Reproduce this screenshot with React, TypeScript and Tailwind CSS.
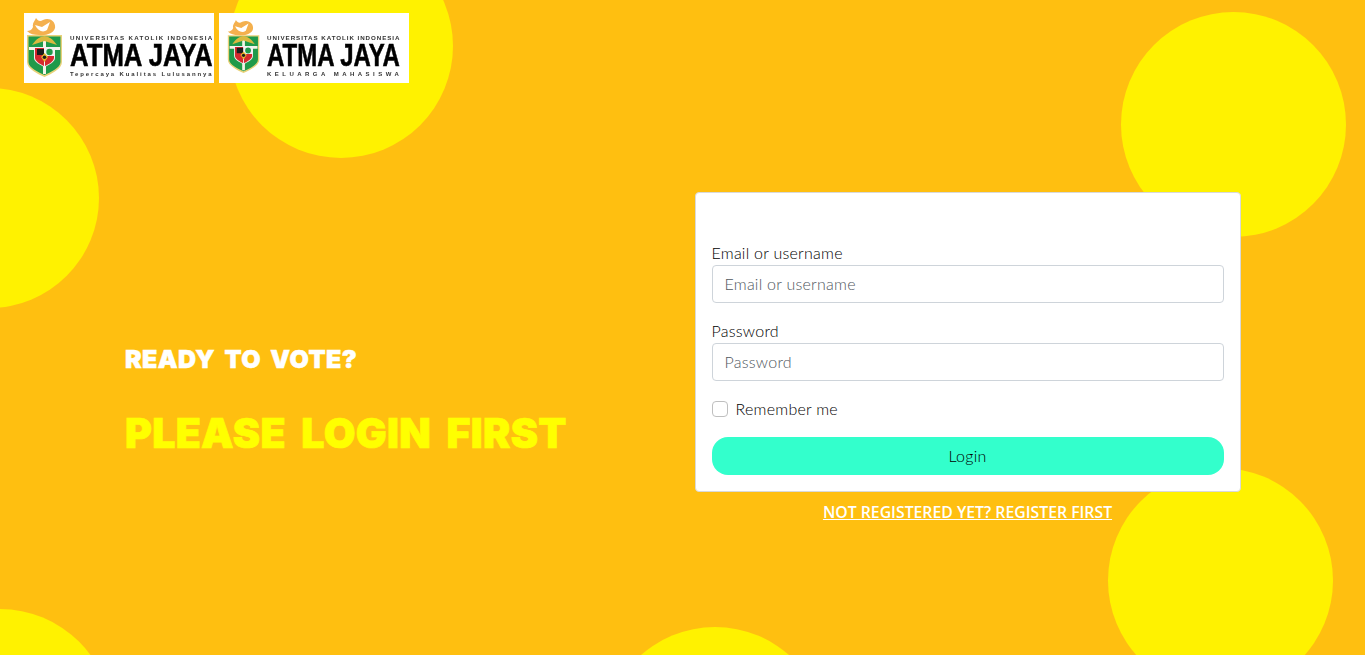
const bodyFont = "font-['Lato','Liberation_Sans',sans-serif]";

function Crest({ className }: { className: string }) {
  return (
    <svg viewBox="0 0 40 60" className={`shrink-0 blur-[0.3px] ${className}`}>
      {/* shield */}
      <g transform="translate(0 -5)">
        <path d="M2 23 H37 V50 C37 57 26 62 19.5 65 C13 62 2 57 2 50 Z" fill="#e8d27a" />
        <path d="M3.5 24.5 H35.5 V50 C35.5 56 25 60.5 19.5 63 C14 60.5 3.5 56 3.5 50 Z" fill="#1f9a4a" />
        <path d="M18 25 H21 V62 H18 Z M4 35 H35 V38 H4 Z" fill="#f4f4e8" />
        <path d="M7 33 C12 26 15 25 19.5 24 C24 25 27 26 32 33 L19.5 29 Z" fill="#d9b93f" />
        {/* inner shield */}
        <path d="M9 35 H30 V46 C30 50 24 53 19.5 55 C15 53 9 50 9 46 Z" fill="#f2f2f2" />
        <path d="M10 36 H19 V45 C19 48 19 50 19 54 C15 52 10 49 10 46 Z" fill="#d42a2e" />
        <path d="M12 37 H19 V43 H12 Z" fill="#1c1c1c" />
        <path d="M20 44 H29 V46 C29 49 24 52 20 54 Z" fill="#d42a2e" />
        <circle cx="24.5" cy="40" r="3.2" fill="#1f9a4a" />
        <path d="M19.5 41 L23 45 L19.5 50 L16 45 Z" fill="#e8b830" />
        <circle cx="19.5" cy="45.3" r="1.8" fill="#1c1c1c" />
      </g>
      {/* flame and bird */}
      <path d="M8 10 C7 6 10 4 11 1 C13 4 15 5 18 3 C25 0 31 5 30 11 C29 16 21 19 14 18 C9 18 5 17 2 14 C4 14 7 13 8 10 Z" fill="#f4b04e" />
      <path d="M10 8 L17 10 L25 5 L22 13 C18 16 13 14 10 8 Z" fill="#fff" />
    </svg>
  );
}

type LogoProps = {
  subtitle: string;
  crestClass: string;
  textClass: string;
  topClass: string;
  nameClass: string;
  subtitleClass: string;
};

function Logo({ subtitle, crestClass, textClass, topClass, nameClass, subtitleClass }: LogoProps) {
  return (
    <div className="flex h-[70px] w-[190px] items-start overflow-hidden bg-white">
      <Crest className={crestClass} />
      <div className={`pt-[21px] font-['Liberation_Sans',sans-serif] text-black blur-[0.25px] ${textClass}`}>
        <div className={`h-[7px] text-[6.2px] leading-[7px] font-bold whitespace-nowrap text-[#333333] ${topClass}`}>UNIVERSITAS KATOLIK INDONESIA</div>
        <div className={`mt-[3px] h-[24px] w-fit origin-left scale-y-[1.45] text-[22px] leading-[24px] font-bold whitespace-nowrap [-webkit-text-stroke:0.4px_black] ${nameClass}`}>ATMA JAYA</div>
        <div className={`mt-[3px] h-[7px] text-[6px] leading-[7px] font-bold whitespace-nowrap text-[#333333] ${subtitleClass}`}>{subtitle}</div>
      </div>
    </div>
  );
}

export default function App() {
  return (
    <div className={`relative h-[655px] overflow-hidden bg-[#ffbf10] ${bodyFont}`}>
      {/* decorative circles */}
      <div className="absolute left-[229px] top-[-66px] h-[224px] w-[224px] rounded-full bg-[#fff200]" />
      <div className="absolute left-[-121px] top-[88px] h-[220px] w-[220px] rounded-full bg-[#fff200]" />
      <div className="absolute left-[1121px] top-[12px] h-[225px] w-[225px] rounded-full bg-[#fff200]" />
      <div className="absolute left-[1108px] top-[468px] h-[225px] w-[225px] rounded-full bg-[#fff200]" />
      <div className="absolute left-[603px] top-[627px] h-[224px] w-[224px] rounded-full bg-[#fff200]" />
      <div className="absolute left-[-112px] top-[609px] h-[224px] w-[224px] rounded-full bg-[#fff200]" />

      <div className="relative">
        <div className="flex gap-[5px] pl-[24px] pt-[13px]">
          <Logo
            subtitle="Tepercaya Kualitas Lulusannya"
            crestClass="ml-[1px] mt-[4px] h-[60px] w-[40px]"
            textClass="ml-[5px] w-[143px]"
            topClass="tracking-[1.3px]"
            nameClass="scale-x-[1.17]"
            subtitleClass="tracking-[1.87px]"
          />
          <Logo
            subtitle="KELUARGA MAHASISWA"
            crestClass="ml-[7px] mt-[4px] h-[58px] w-[36px]"
            textClass="ml-[5px] w-[133px]"
            topClass="tracking-[0.95px]"
            nameClass="scale-x-[1.09]"
            subtitleClass="tracking-[3.47px]"
          />
        </div>

        <div className="mx-auto mt-[109px] grid w-[1140px] grid-cols-2">
          <div className="px-3 pl-[12.5px] pt-[155px] font-['Inter',sans-serif] font-black whitespace-nowrap">
            <div className="text-[25px] leading-[24px] tracking-[0.4px] text-white [word-spacing:4px] [-webkit-text-stroke:0.5px_white]">READY TO VOTE?</div>
            <div className="mt-[40px] text-[41px] leading-[44px] tracking-[0.3px] text-[#ffff00] [word-spacing:7px] [-webkit-text-stroke:0.7px_#ffff00]">PLEASE LOGIN FIRST</div>
          </div>

          <div className="px-3">
            <div className="rounded-[4px] border border-[#d9d9d9] bg-white p-4 text-[16px] leading-[24px] font-light tracking-[0.25px] text-black">
              <div className="h-8" />
              <label className="block">Email or username</label>
              <input
                placeholder="Email or username"
                className="mb-4 block h-[38px] w-full rounded-[4px] border border-[#ced4da] bg-white px-3 pb-[2px] tracking-[0.25px] outline-none placeholder:text-[#50575e]"
              />
              <label className="block">Password</label>
              <input
                placeholder="Password"
                type="password"
                className="mb-4 block h-[38px] w-full rounded-[4px] border border-[#ced4da] bg-white px-3 pb-[2px] tracking-[0.25px] outline-none placeholder:text-[#50575e]"
              />
              <div className="mb-4 flex h-6 items-center gap-2">
                <span className="h-4 w-4 rounded-[4px] border border-[#bfbfbf] bg-white" />
                <span>Remember me</span>
              </div>
              <button className="block h-[38px] w-full rounded-[16px] bg-[#33ffcc] text-center tracking-[0.25px]">Login</button>
            </div>
            <div className="mt-2 text-center font-['Open_Sans',sans-serif] text-[15.8px] leading-[24px]">
              <a className="font-semibold text-white underline">NOT REGISTERED YET? REGISTER FIRST</a>
            </div>
          </div>
        </div>
      </div>
    </div>
  );
}
